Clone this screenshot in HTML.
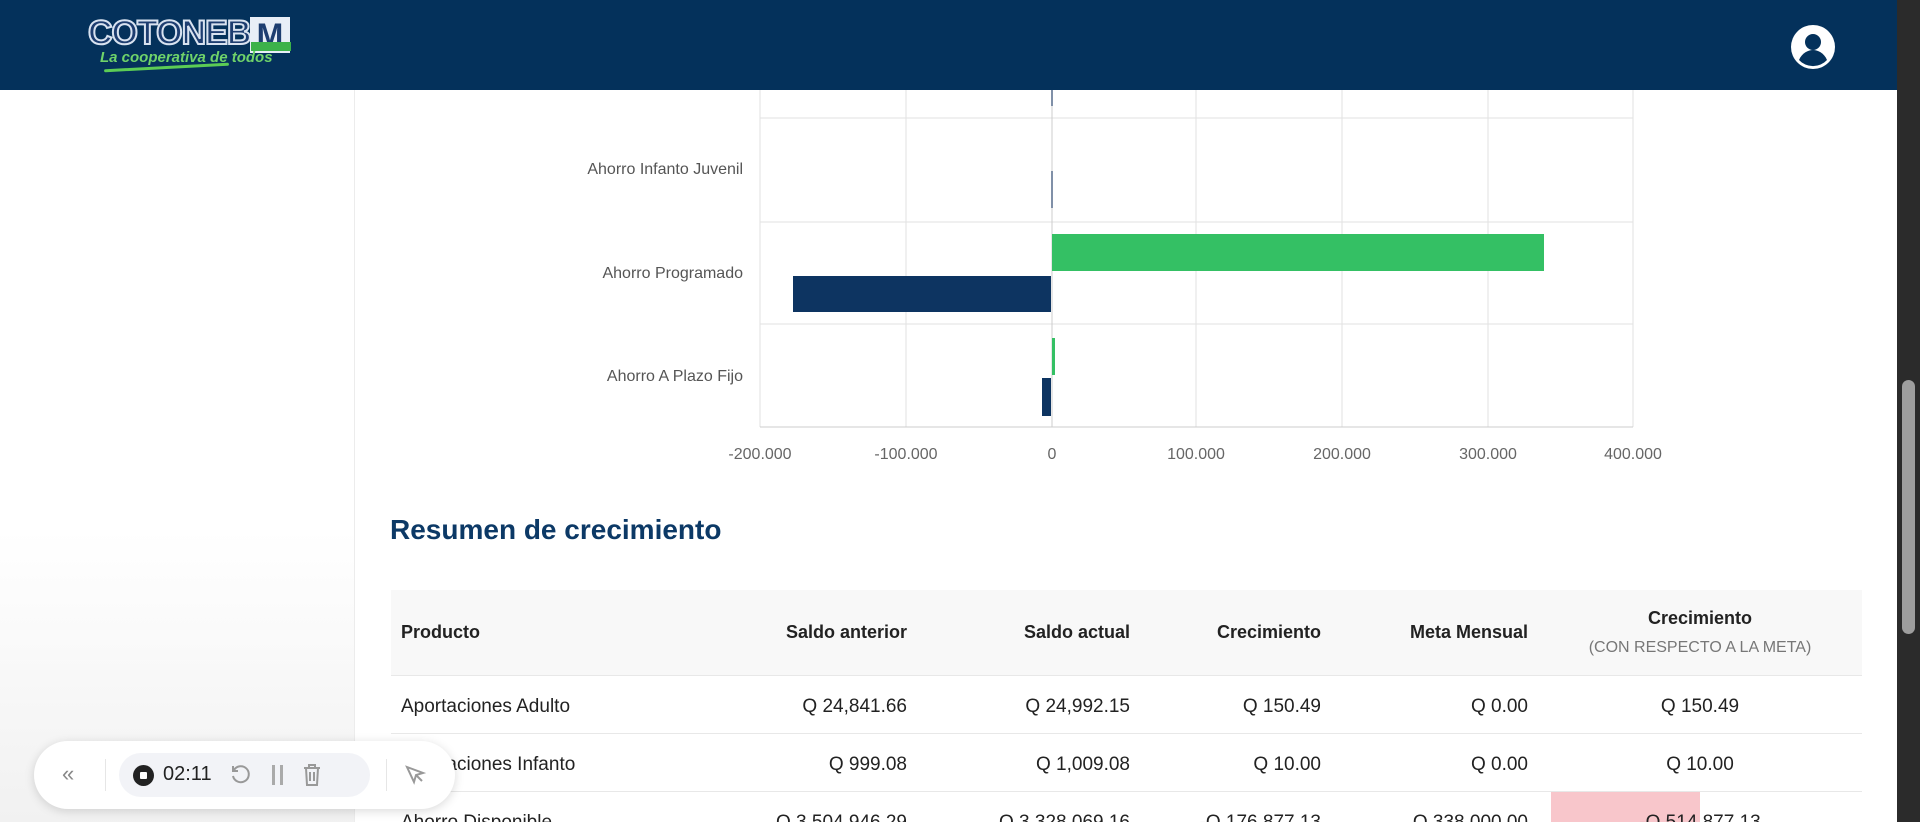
<!DOCTYPE html>
<html style="overflow:hidden;height:822px"><head><meta charset="utf-8"><style>
*{margin:0;padding:0;box-sizing:border-box}
body{width:1920px;height:822px;overflow:hidden;background:#fff;font-family:"Liberation Sans",sans-serif;position:relative}
#wrap{position:absolute;left:0;top:0;width:1920px;height:822px;overflow:hidden}
.hdr{position:absolute;left:0;top:0;width:1897px;height:90px;background:#04315b}
.side{position:absolute;left:0;top:90px;width:355px;height:732px;background:linear-gradient(#fff 60%,#f1f1f1);border-right:1px solid #ececec}
.sb{position:absolute;left:1897px;top:0;width:23px;height:822px;background:#2b2b2b}
.thumb{position:absolute;left:1902px;top:380px;width:13px;height:254px;background:#9e9e9e;border-radius:7px}
.t{position:absolute;white-space:nowrap}
.lab{color:#555;font-size:16px;text-align:right;width:300px;left:443px}
.tick{color:#666;font-size:16px;top:446px;transform:translateX(-50%)}
table{position:absolute;left:391px;top:590px;width:1471px;border-collapse:collapse;font-size:19px;color:#222}
th{background:#f8f8f8;height:85px;font-weight:bold;font-size:18px;text-align:right;padding:0 10px}
td{height:58px;border-top:1px solid #e8e8e8;text-align:right;padding:5px 10px 0}
.tb{position:absolute;left:34px;top:741px;width:421px;height:68px;background:#fff;border-radius:34px;box-shadow:0 2px 10px rgba(0,0,0,.15)}
</style></head><body><div id="wrap">
<div class="hdr">
<div class="t" style="left:88px;top:14px;font:bold 34px 'Liberation Sans';color:#1d3d70;-webkit-text-stroke:2px #d8e2f0;letter-spacing:-1px">COTONEB</div>
<div class="t" style="left:250px;top:17px;width:40px;height:36px;background:#e8eef7;color:#1d3d70;font:bold 32px 'Liberation Sans';text-align:center;line-height:36px">M</div>
<div class="t" style="left:251px;top:42px;width:40px;height:9px;background:#3cb24a"></div>
<div class="t" style="left:100px;top:49px;font:italic bold 15px 'Liberation Sans';color:#6fd36a">La cooperativa de todos</div>
<div class="t" style="left:104px;top:66px;width:125px;height:3px;background:#5ccc55;border-radius:2px;transform:rotate(-3deg)"></div>
<svg class="t" style="left:1791px;top:25px" width="44" height="44" viewBox="0 0 44 44"><circle cx="22" cy="22" r="22" fill="#fff"/><circle cx="22" cy="17" r="8" fill="#04315b"/><path d="M8 35c3-7 9-10 14-10s11 3 14 10a19 19 0 0 1-28 0z" fill="#04315b"/></svg>
</div>
<div class="side"></div>
<svg class="t" style="left:0;top:0" width="1897" height="822">
<g stroke="#e2e2e2" stroke-width="1">
<line x1="760" y1="90" x2="760" y2="427"/><line x1="906" y1="90" x2="906" y2="427"/><line x1="1196" y1="90" x2="1196" y2="427"/><line x1="1342" y1="90" x2="1342" y2="427"/><line x1="1488" y1="90" x2="1488" y2="427"/><line x1="1633" y1="90" x2="1633" y2="427"/>
<line x1="760" y1="118" x2="1633" y2="118"/><line x1="760" y1="222" x2="1633" y2="222"/><line x1="760" y1="324" x2="1633" y2="324"/>
</g>
<line x1="760" y1="427" x2="1633" y2="427" stroke="#ccc"/>
<line x1="1052" y1="90" x2="1052" y2="427" stroke="#ccc"/>
<rect x="1052" y="234" width="492" height="37" fill="#34c064"/>
<rect x="793" y="276" width="258" height="36" fill="#0d3461"/>
<rect x="1052" y="338" width="3" height="37" fill="#34c064"/>
<rect x="1042" y="378" width="9" height="38" fill="#0d3461"/>
<rect x="1051" y="171" width="2" height="37" fill="#8090a8"/>
<rect x="1051" y="90" width="2" height="16" fill="#8090a8"/>
</svg>
<div class="t lab" style="top:161px">Ahorro Infanto Juvenil</div>
<div class="t lab" style="top:265px">Ahorro Programado</div>
<div class="t lab" style="top:368px">Ahorro A Plazo Fijo</div>
<div class="t tick" style="left:760px">-200.000</div><div class="t tick" style="left:906px">-100.000</div><div class="t tick" style="left:1052px">0</div><div class="t tick" style="left:1196px">100.000</div><div class="t tick" style="left:1342px">200.000</div><div class="t tick" style="left:1488px">300.000</div><div class="t tick" style="left:1633px">400.000</div>
<div class="t" style="left:390px;top:514px;font-size:28px;font-weight:bold;color:#0c3966">Resumen de crecimiento</div>
<table>
<tr><th style="text-align:left;width:302px">Producto</th><th style="width:224px">Saldo anterior</th><th style="width:223px">Saldo actual</th><th style="width:191px">Crecimiento</th><th style="width:207px">Meta Mensual</th><th style="text-align:center">Crecimiento<div style="font-weight:normal;font-size:16px;color:#777;margin-top:10px">(CON RESPECTO A LA META)</div></th></tr>
<tr><td style="text-align:left">Aportaciones Adulto</td><td>Q 24,841.66</td><td>Q 24,992.15</td><td>Q 150.49</td><td>Q 0.00</td><td style="text-align:center">Q 150.49</td></tr>
<tr><td style="text-align:left">Aportaciones Infanto</td><td>Q 999.08</td><td>Q 1,009.08</td><td>Q 10.00</td><td>Q 0.00</td><td style="text-align:center">Q 10.00</td></tr>
<tr><td style="text-align:left">Ahorro Disponible</td><td>Q 3,504,946.29</td><td>Q 3,328,069.16</td><td>-Q 176,877.13</td><td>Q 338,000.00</td><td style="text-align:center;background:linear-gradient(90deg,#fff 13px,#f8c6cb 13px,#f8c6cb 162px,#fff 162px)">-Q 514,877.13</td></tr>
</table>
<div class="tb">
<div class="t" style="left:28px;top:20px;font-size:22px;color:#888">«</div>
<div class="t" style="left:71px;top:18px;width:1px;height:32px;background:#e6e6e6"></div>
<div class="t" style="left:85px;top:12px;width:251px;height:44px;background:#f2f3f7;border-radius:22px"></div>
<div class="t" style="left:99px;top:24px;width:21px;height:21px;border-radius:50%;background:#222"><div style="margin:7px;width:7px;height:7px;background:#fff;border-radius:1px"></div></div>
<div class="t" style="left:129px;top:22px;font-size:20px;color:#222">02:11</div>
<svg class="t" style="left:196px;top:23px" width="22" height="22" viewBox="0 0 22 22" fill="none" stroke="#999" stroke-width="2"><path d="M4 6a8 8 0 1 1-1 6"/><path d="M3 2v5h5"/></svg>
<div class="t" style="left:238px;top:24px;width:3px;height:20px;background:#aaa"></div><div class="t" style="left:246px;top:24px;width:3px;height:20px;background:#aaa"></div>
<svg class="t" style="left:268px;top:22px" width="20" height="24" viewBox="0 0 20 24" fill="none" stroke="#999" stroke-width="2"><path d="M2 5h16M7 5V2h6v3M4 5l1 17h10l1-17M8 9v9M12 9v9"/></svg>
<div class="t" style="top:18px;width:1px;height:32px;background:#e6e6e6;left:352px"></div>
<svg class="t" style="left:370px;top:23px" width="22" height="22" viewBox="0 0 22 22" fill="none" stroke="#999" stroke-width="2"><path d="M3 3l16 6-7 2-2 7z"/><path d="M12 11l6 6"/></svg>
</div>
<div class="sb"></div><div class="thumb"></div>
</div></body></html>
